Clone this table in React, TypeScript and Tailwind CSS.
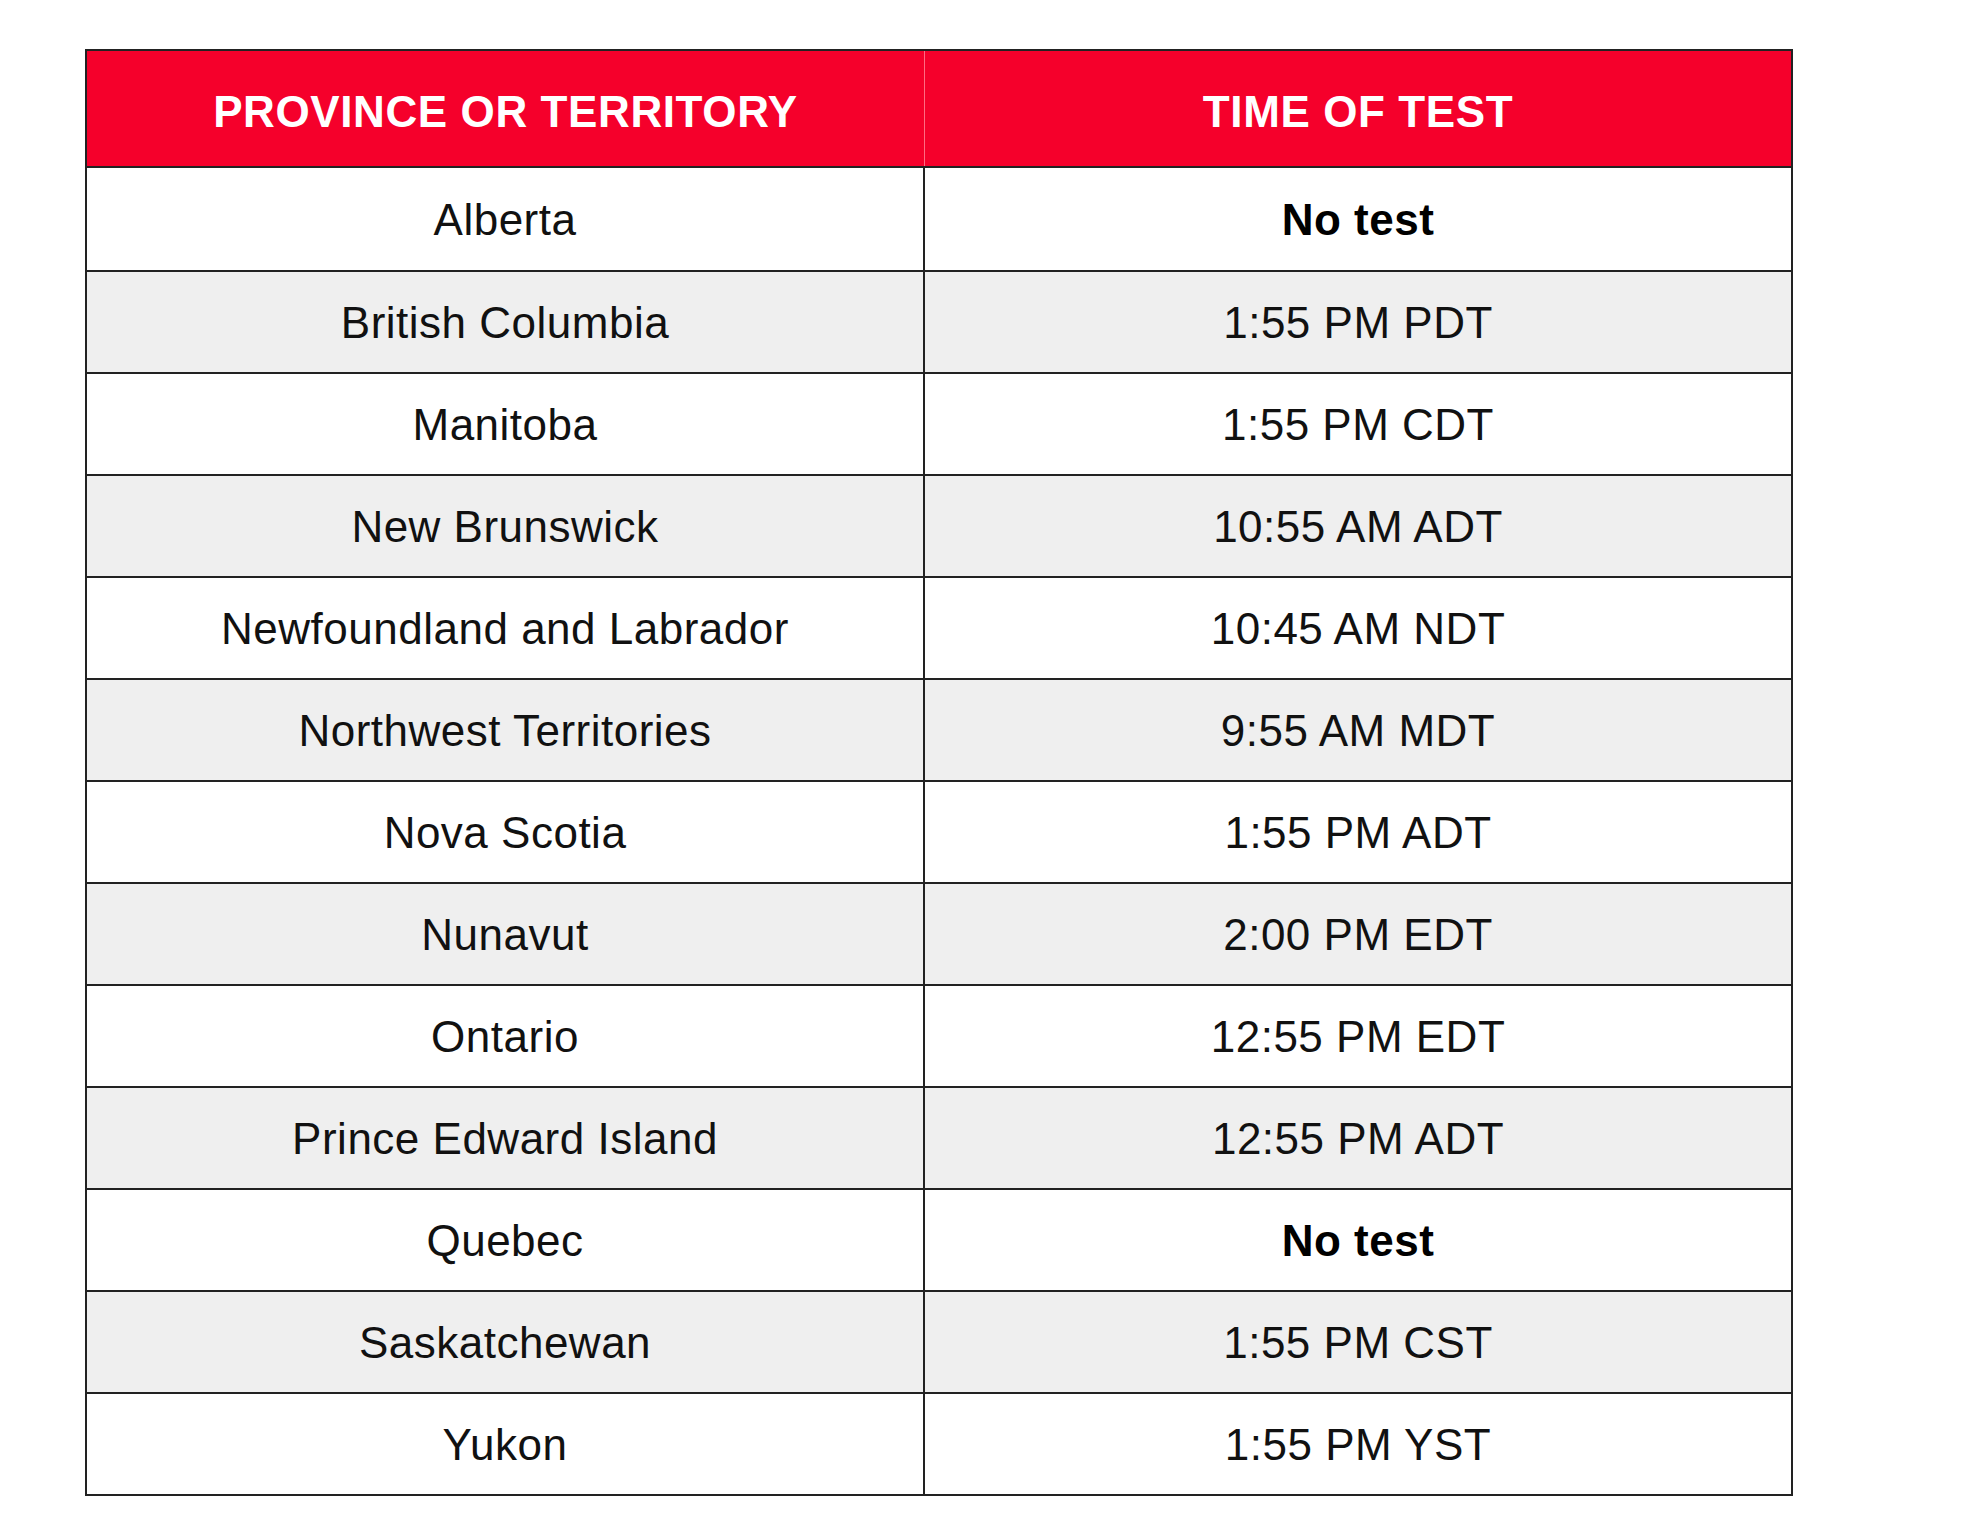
const rows: [string, string, boolean?][] = [
  ["Alberta", "No test", true],
  ["British Columbia", "1:55 PM PDT"],
  ["Manitoba", "1:55 PM CDT"],
  ["New Brunswick", "10:55 AM ADT"],
  ["Newfoundland and Labrador", "10:45 AM NDT"],
  ["Northwest Territories", "9:55 AM MDT"],
  ["Nova Scotia", "1:55 PM ADT"],
  ["Nunavut", "2:00 PM EDT"],
  ["Ontario", "12:55 PM EDT"],
  ["Prince Edward Island", "12:55 PM ADT"],
  ["Quebec", "No test", true],
  ["Saskatchewan", "1:55 PM CST"],
  ["Yukon", "1:55 PM YST"],
];

export default function App() {
  return (
    <div className="min-h-[1516px] w-[1980px] bg-white pl-[85px] pt-[49px] font-['Liberation_Sans',Arial,sans-serif]">
      <div className="w-[1708px] border-2 border-[#222]">
        <div className="flex h-[117px] bg-[#f5002b] border-b-2 border-[#222] text-[44px] font-bold tracking-[0.6px] text-white">
          <div className="flex w-[838px] items-center justify-center border-r border-[#ff6b82] pt-[7px]">
            PROVINCE OR TERRITORY
          </div>
          <div className="flex flex-1 items-center justify-center pt-[7px]">TIME OF TEST</div>
        </div>
        {rows.map(([place, time, bold], i) => (
          <div
            key={place}
            className={
              "flex h-[102px] text-[44px] tracking-[0.5px] text-[#111] " +
              (i > 0 ? "border-t-2 border-[#222] " : "") +
              (i % 2 === 1 ? "bg-[#efefef]" : "bg-white")
            }
          >
            <div className="flex w-[838px] items-center justify-center border-r-2 border-[#222] pt-[1px]">
              {place}
            </div>
            <div className={"flex flex-1 items-center justify-center pt-[1px] " + (bold ? "font-bold text-black" : "")}>
              {time}
            </div>
          </div>
        ))}
      </div>
    </div>
  );
}
